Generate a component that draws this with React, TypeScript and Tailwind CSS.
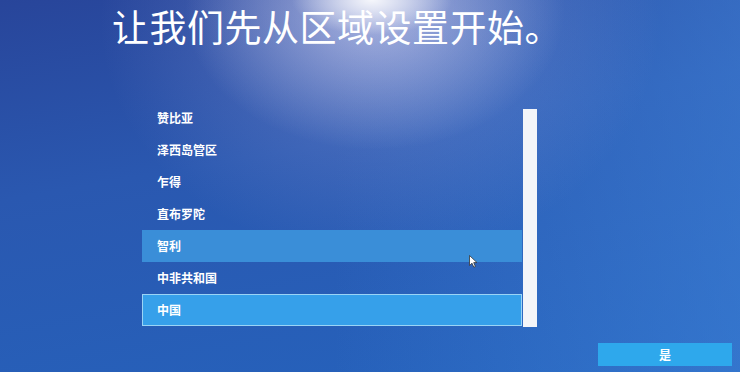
import React from "react";

const items = ["赞比亚", "泽西岛管区", "乍得", "直布罗陀", "智利", "中非共和国", "中国"];

export default function App() {
  return (
    <div className="relative w-[740px] h-[372px] overflow-hidden flex flex-col text-white font-['Noto_Sans_CJK_SC','Noto_Sans',sans-serif] [background-image:radial-gradient(ellipse_80px_35px_at_372px_0px,rgba(255,255,255,0.9),rgba(255,255,255,0)),radial-gradient(ellipse_190px_140px_at_375px_10px,rgba(220,220,245,0.6),rgba(220,220,245,0)),radial-gradient(ellipse_280px_240px_at_380px_20px,rgba(150,160,220,0.45),rgba(150,160,220,0)),linear-gradient(90deg,rgba(60,120,210,0)_45%,rgba(70,140,225,0.45)_100%),linear-gradient(170deg,#28459a_0%,#2a58b0_40%,#2563bd_100%)]">
      <h1 className="pl-[112px] pt-[3px] text-[37px] leading-[46px] font-normal tracking-[0.5px] whitespace-nowrap">
        让我们先从区域设置开始。
      </h1>
      <div className="flex ml-[142px] mt-[53px]">
        <ul className="w-[380px]">
          {items.map((t) => {
            const cls =
              t === "中国"
                ? "bg-[#36a0ea] border border-[#9ad4f6]"
                : t === "智利"
                ? "bg-[#3a8ed8] border border-transparent"
                : "border border-transparent";
            return (
              <li
                key={t}
                className={`h-[32px] flex items-center pl-[14px] text-[12px] font-bold leading-none ${cls}`}
              >
                {t}
              </li>
            );
          })}
        </ul>
        <div className="ml-[1px] mt-[7px] w-[14px] h-[218px] bg-[#f3f5f9]" />
      </div>
      <div className="flex justify-end pr-[8px] mt-[16px]">
        <button className="w-[134px] h-[23px] bg-[#2ea8ec] text-white text-[12px] font-bold flex items-center justify-center">
          是
        </button>
      </div>
      <svg
        className="absolute left-[469px] top-[255px]"
        width="9"
        height="13"
        viewBox="0 0 9 13"
      >
        <path d="M0.5 0.5 L0.5 10.5 L3 8.2 L4.8 12.2 L6.4 11.5 L4.7 7.6 L8 7.6 Z" fill="#fff" stroke="#333" strokeWidth="0.8" />
      </svg>
    </div>
  );
}
